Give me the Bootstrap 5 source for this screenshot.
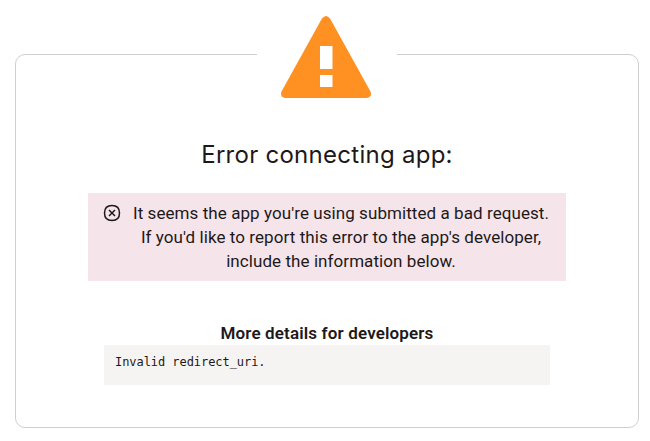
<!DOCTYPE html>
<html lang="en">
<head>
<meta charset="utf-8">
<meta name="viewport" content="width=device-width, initial-scale=1">
<title>Error connecting app</title>
<link href="https://cdn.jsdelivr.net/npm/bootstrap@5.3.0/dist/css/bootstrap.min.css" rel="stylesheet">
<style>
body { font-family: Roboto, "Liberation Sans", sans-serif; color: #1e1919; overflow: hidden; }
.error-card { margin: 54px 11px 0 15px; height: 374px; border: 1px solid #cfcfcf; border-radius: 10px; }
.warning-holder { width: 140px; height: 90px; margin-top: -46px; padding-right: 2px; }
.warning-holder svg { margin-top: -1px; }
.error-title { font: 400 24px/32px Inter, sans-serif; margin-top: 40px; margin-bottom: 22px; letter-spacing: .27px; }
.error-banner { width: 478px; height: 88px; background: #f5e4ea; padding: 8px 16px 8px 12px; line-height: 24px; }
.error-banner svg { flex: none; }
.banner-text { font-size: 17px; letter-spacing: .07px; }
.details { width: 446px; margin-top: 40px; }
.details-title { font-size: 17px; line-height: 24px; font-weight: 600; letter-spacing: .15px; }
.details-code { height: 40px; background: #f5f4f3; font: 12px/16px "DejaVu Sans Mono", monospace; padding: 9px 11px; color: #1e1919; letter-spacing: -.06px; }
</style>
</head>
<body class="bg-white">
<main class="error-card d-flex flex-column align-items-center">
  <div class="warning-holder bg-white d-flex justify-content-center">
    <svg width="92" height="90" viewBox="0 0 92 90" aria-hidden="true">
      <path d="M41.800 10.800Q46 5.200 50.200 10.800L90.500 83.500Q92.500 89 86.500 90H5.500Q-.5 89 1.500 83.500Z" fill="#ff9022"/>
      <path d="M40 38h12.500v23H40zM40 67h12.500V79H40z" fill="#fff"/>
    </svg>
  </div>
  <h1 class="error-title text-center">Error connecting app:</h1>
  <div class="error-banner d-flex gap-2" role="alert">
    <svg width="24" height="24" viewBox="0 0 24 24" fill="none" stroke="#1e1919" stroke-width="1.5" aria-hidden="true">
      <path d="M12 4.500c5 0 7.500 2.500 7.500 7.500s-2.500 7.500-7.500 7.500S4.500 17 4.500 12 7 4.500 12 4.500ZM9 9l6 6M15 9l-6 6"/>
    </svg>
    <div class="banner-text flex-grow-1 text-center text-nowrap">It seems the app you're using submitted a bad request.<br>If you'd like to report this error to the app's developer,<br>include the information below.</div>
  </div>
  <section class="details">
    <h2 class="details-title text-center mb-0">More details for developers</h2>
    <pre class="details-code mb-0">Invalid redirect_uri.</pre>
  </section>
</main>
<script src="https://cdn.jsdelivr.net/npm/bootstrap@5.3.0/dist/js/bootstrap.bundle.min.js"></script>
</body>
</html>
